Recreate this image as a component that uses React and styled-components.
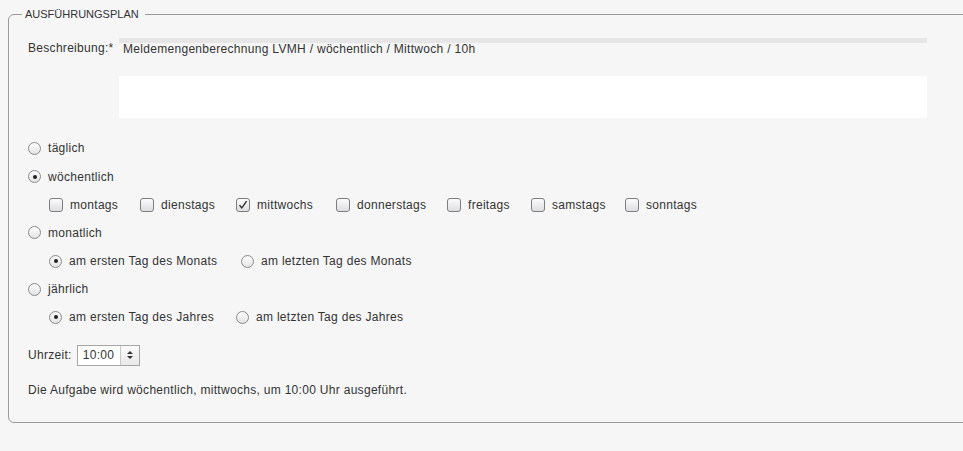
import React, { useState } from 'react';
import styled, { createGlobalStyle } from 'styled-components';

const GlobalStyle = createGlobalStyle`
  html, body {
    margin: 0;
    padding: 0;
    background: #f6f6f6;
    overflow: hidden;
  }
  body {
    font-family: "Liberation Sans", Arial, sans-serif;
    font-size: 12px;
    letter-spacing: 0.3px;
    color: #333;
  }
`;

const Page = styled.div`
  width: 963px;
  height: 451px;
  padding: 8px 0 0 8px;
  box-sizing: border-box;
  overflow: hidden;
`;

const Fieldset = styled.fieldset`
  width: 1000px;
  margin: 0;
  padding: 6px 0 20px 19px;
  border: 1px solid #9a9a9a;
  border-radius: 6px 0 0 6px;
  box-sizing: border-box;
  height: 415px;
`;

const Legend = styled.legend`
  padding: 0 6px 0 3px;
  margin-left: -6px;
  font-size: 11px;
  letter-spacing: 0;
  color: #333;
`;

const DescRow = styled.div`
  display: flex;
  align-items: flex-start;
  margin-top: 12px;
`;

const FieldLabel = styled.div`
  width: 91px;
  padding-top: 3px;
`;

const DescCol = styled.div`
  display: flex;
  flex-direction: column;
  width: 808px;
`;

const ReadOnly = styled.div`
  border-top: 5px solid #e6e6e6;
  padding: 0 4px;
  height: 18px;
  line-height: 12px;
`;

const TextArea = styled.div`
  margin-top: 15px;
  height: 42px;
  background: #fff;
`;

const Options = styled.div`
  margin-top: 16px;
  display: flex;
  flex-direction: column;
`;

const Row = styled.div`
  display: flex;
  align-items: center;
  height: ${p => p.$h || 28}px;
  padding-left: ${p => p.$indent || 0}px;
`;

const Choice = styled.label`
  display: flex;
  align-items: center;
  gap: ${p => p.$gap || 7}px;
  width: ${p => (p.$w ? p.$w + 'px' : 'auto')};
  cursor: default;
`;

const RadioDot = styled.span`
  width: 13px;
  height: 13px;
  border-radius: 50%;
  border: 1px solid #8a8a8a;
  box-sizing: border-box;
  background: linear-gradient(#fdfdfd, #e4e4e4);
  display: flex;
  align-items: center;
  justify-content: center;
  flex: none;
  &::after {
    content: '';
    width: 4px;
    height: 4px;
    border-radius: 50%;
    background: #222;
    display: ${p => (p.$on ? 'block' : 'none')};
  }
`;

const Box = styled.span`
  width: 14px;
  height: 14px;
  border-radius: 3px;
  border: 1px solid #7d7d7d;
  box-sizing: border-box;
  background: linear-gradient(#fbfbfb, #dedee2);
  display: flex;
  align-items: center;
  justify-content: center;
  flex: none;
`;

const TimeRow = styled.div`
  display: flex;
  align-items: center;
  gap: 5px;
  margin-top: 13px;
  height: 22px;
`;

const Spinner = styled.div`
  display: flex;
  height: 21px;
  border: 1px solid #a5a5a5;
  box-sizing: border-box;
  background: #fff;
`;

const SpinValue = styled.div`
  width: 43px;
  line-height: 19px;
  padding-left: 5px;
  box-sizing: border-box;
  border-right: 1px solid #c8c8c8;
`;

const SpinButtons = styled.div`
  width: 18px;
  display: flex;
  flex-direction: column;
  align-items: center;
  justify-content: center;
  gap: 2px;
  background: linear-gradient(#fafafa, #e9e9e9);
`;

const Arrow = styled.span`
  width: 0;
  height: 0;
  border-left: 3px solid transparent;
  border-right: 3px solid transparent;
  ${p => (p.$up ? 'border-bottom: 3px solid #333;' : 'border-top: 3px solid #333;')}
`;

const Summary = styled.div`
  margin-top: 17px;
`;

const Radio = ({ on, label, w }) => (
  <Choice $w={w}>
    <RadioDot $on={on} />
    {label}
  </Choice>
);

const Check = ({ on, label, w }) => (
  <Choice $w={w}>
    <Box>
      {on && (
        <svg width="10" height="10" viewBox="0 0 10 10">
          <path d="M1.5 5.2 L3.8 8 L8.6 1.2" fill="none" stroke="#222" strokeWidth="1.3" />
        </svg>
      )}
    </Box>
    {label}
  </Choice>
);

const days = [
  ['montags', 91],
  ['dienstags', 96],
  ['mittwochs', 100],
  ['donnerstags', 111],
  ['freitags', 84],
  ['samstags', 94],
  ['sonntags', 0],
];

export default function App() {
  const [checked] = useState('mittwochs');
  return (
    <Page>
      <GlobalStyle />
      <Fieldset>
        <Legend>AUSFÜHRUNGSPLAN</Legend>
        <DescRow>
          <FieldLabel>Beschreibung:*</FieldLabel>
          <DescCol>
            <ReadOnly>Meldemengenberechnung LVMH / wöchentlich / Mittwoch / 10h</ReadOnly>
            <TextArea />
          </DescCol>
        </DescRow>
        <Options>
          <Row><Radio label="täglich" /></Row>
          <Row $h={29}><Radio on label="wöchentlich" /></Row>
          <Row $indent={21} $h={27}>
            {days.map(([d, w]) => (
              <Check key={d} label={d} on={d === checked} w={w || undefined} />
            ))}
          </Row>
          <Row $h={29}><Radio label="monatlich" /></Row>
          <Row $indent={21}>
            <Radio on label="am ersten Tag des Monats" w={192} />
            <Radio label="am letzten Tag des Monats" />
          </Row>
          <Row><Radio label="jährlich" /></Row>
          <Row $indent={21}>
            <Radio on label="am ersten Tag des Jahres" w={187} />
            <Radio label="am letzten Tag des Jahres" />
          </Row>
        </Options>
        <TimeRow>
          Uhrzeit:
          <Spinner>
            <SpinValue>10:00</SpinValue>
            <SpinButtons>
              <Arrow $up />
              <Arrow />
            </SpinButtons>
          </Spinner>
        </TimeRow>
        <Summary>Die Aufgabe wird wöchentlich, mittwochs, um 10:00 Uhr ausgeführt.</Summary>
      </Fieldset>
    </Page>
  );
}
